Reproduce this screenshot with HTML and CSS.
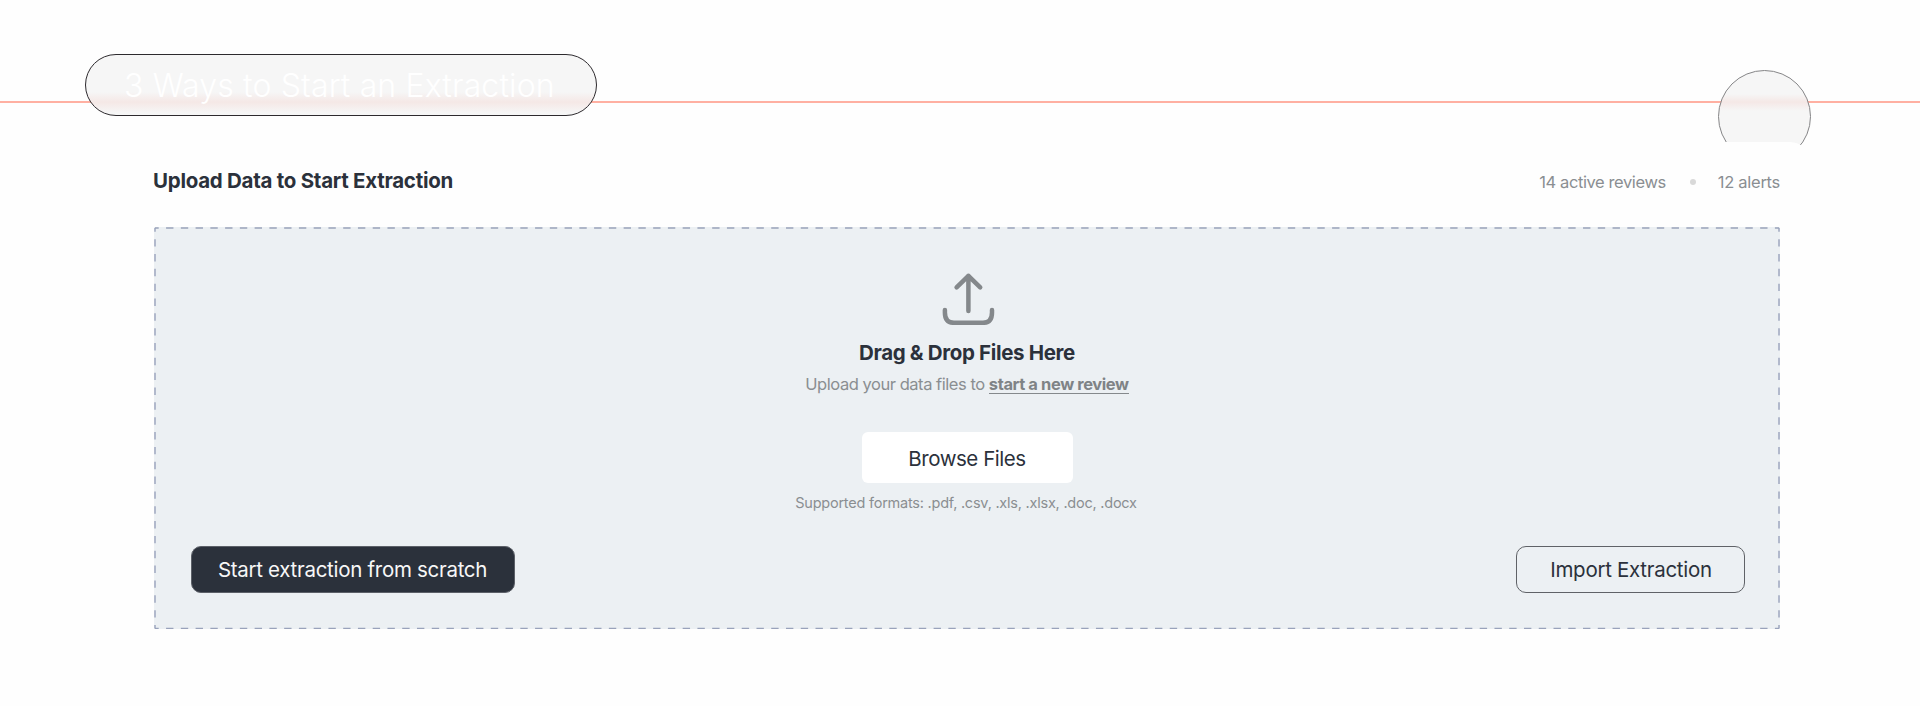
FILE: index.html
```
<!DOCTYPE html>
<html lang="en">
<head>
<meta charset="utf-8">
<title>Start an Extraction</title>
<link rel="stylesheet" href="styles.css">
</head>
<body>
<header class="top">
  <div class="rule"></div>
  <h1 class="pill"><span>3 Ways to Start an Extraction</span></h1>
  <div class="disc"></div>
</header>
<main class="panel">
  <div class="panel-head">
    <h2 class="heading">Upload Data to Start Extraction</h2>
    <div class="stats"><span class="reviews">14 active reviews</span><i class="dot"></i><span class="alerts">12 alerts</span></div>
  </div>
  <section class="drop">
    <svg class="dashes" width="1626" height="403" viewBox="0 0 1626 403" fill="none" stroke="#99a2bb" stroke-width="1.4">
      <path d="M1 1H1625" stroke-dasharray="7.38 7.38" stroke-dashoffset="3.69"/>
      <path d="M1 401.4H1625" stroke-dasharray="7.38 7.38" stroke-dashoffset="3.69"/>
      <path d="M1 1V401.4" stroke-dasharray="7.42 7.42" stroke-dashoffset="3.71"/>
      <path d="M1625 1V401.4" stroke-dasharray="7.42 7.42" stroke-dashoffset="3.71"/>
    </svg>
    <svg class="upload" width="56" height="56" viewBox="0 0 56 56" fill="none" stroke="#84888b" stroke-width="4.5" stroke-linecap="round" stroke-linejoin="round">
      <path d="M28.4 42V6.8M16.6 18.4L28.4 6.8L40.2 18.4"/>
      <path d="M4.9 41V43.5Q4.9 53.8 14 53.8H43Q52 53.8 52 43.5V41"/>
    </svg>
    <h3 class="drop-title">Drag &amp; Drop Files Here</h3>
    <p class="hint"><span>Upload your data files to </span><a class="link">start a new review</a></p>
    <button class="browse"><span>Browse Files</span></button>
    <p class="formats">Supported formats: .pdf, .csv, .xls, .xlsx, .doc, .docx</p>
    <div class="actions">
      <button class="btn dark">Start extraction from scratch</button>
      <button class="btn outline">Import Extraction</button>
    </div>
  </section>
</main>
</body>
</html>
```
FILE: styles.css
```
* { box-sizing: border-box; margin: 0; padding: 0; }
body { width: 1920px; height: 706px; background: #fefefe; font-family: Inter, sans-serif; color: #2b313b; overflow: hidden; }
button { font-family: inherit; color: inherit; border: 0; }
.top { position: relative; height: 142px; padding: 54px 0 0 85px; }
.rule { position: absolute; left: 0; right: 0; top: 101px; height: 2px; background: #ffb0a2; }
.pill { position: relative; width: 512px; height: 62px; border: 1px solid #2d2a2e; border-radius: 31px; padding-left: 38px; font-size: 32px; letter-spacing: .14px; font-weight: 300; line-height: 61px; white-space: nowrap; color: #fff; background: linear-gradient(#f6f6f6 37px, #f5e8e6 47px, #f6f6f6 58px); }
.disc { position: absolute; left: 1718px; top: 70px; width: 93px; height: 93px; border: 1px solid #858587; border-radius: 50%; background: linear-gradient(#f6f6f6 23px, #f5e8e6 31px, #f6f6f6 40px); }
.panel { position: relative; width: 1700px; height: 564px; margin-left: 110px; padding: 0 30px 0 44px; border-radius: 20px; background: #fefefe; }
.panel-head { display: flex; justify-content: space-between; height: 85px; padding-top: 25px; }
.heading { margin-left: -1px; font-size: 20.5px; letter-spacing: -.27px; font-weight: 700; line-height: 27px; white-space: nowrap; }
.stats { display: flex; align-items: center; height: 29px; color: #8a8e92; font-size: 16.5px; white-space: nowrap; }
.reviews { letter-spacing: -.4px; }
.alerts { letter-spacing: -.28px; }
.dot { width: 6px; height: 6px; margin: 0 22px 0 24px; border-radius: 50%; background: #d9d9d9; }
.drop { position: relative; width: 1626px; height: 402px; padding-top: 42px; display: flex; flex-direction: column; align-items: center; background: #ecf0f3; }
.dashes { position: absolute; left: 0; top: 0; }
.upload { display: block; flex: none; margin-left: 2px; }
.drop-title { margin-top: 15px; font-size: 20.5px; letter-spacing: -.34px; line-height: 26px; font-weight: 700; white-space: nowrap; }
.hint { margin-top: 6px; font-size: 16.5px; letter-spacing: -.46px; line-height: 24px; color: #8a8e91; white-space: pre; }
.link { display: inline-block; height: 22px; letter-spacing: -.4px; font-weight: 700; color: #7f8386; border-bottom: 1.5px solid #85898c; }
.browse { margin-top: 36px; width: 211px; height: 51px; padding-top: 1px; border-radius: 6px; background: #fff; font-size: 20.5px; letter-spacing: -.45px; flex: none; }
.formats { margin: 11px 2px 0 0; font-size: 14.5px; letter-spacing: -.23px; line-height: 18px; color: #8a8e91; white-space: nowrap; }
.actions { align-self: stretch; display: flex; justify-content: space-between; margin-top: 34px; padding: 0 35px 0 37px; }
.btn { height: 47px; border-radius: 10px; font-size: 20.5px; letter-spacing: -.29px; white-space: nowrap; }
.dark { width: 324px; padding-right: 1px; color: #f7f7f7; background: #2b313b; border: 1px solid #5c6068; }
.outline { width: 229px; padding-left: 1px; background: transparent; border: 1px solid #5f6267; }
```
